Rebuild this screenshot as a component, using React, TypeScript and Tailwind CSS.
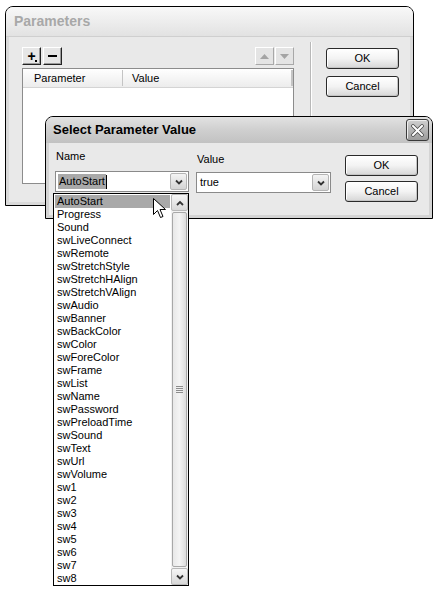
import React from 'react';

const FONT = { fontFamily: '"Liberation Sans", Arial, sans-serif' };

const PARAM_NAMES = [
  'AutoStart', 'Progress', 'Sound', 'swLiveConnect', 'swRemote', 'swStretchStyle',
  'swStretchHAlign', 'swStretchVAlign', 'swAudio', 'swBanner', 'swBackColor', 'swColor',
  'swForeColor', 'swFrame', 'swList', 'swName', 'swPassword', 'swPreloadTime', 'swSound',
  'swText', 'swUrl', 'swVolume', 'sw1', 'sw2', 'sw3', 'sw4', 'sw5', 'sw6', 'sw7', 'sw8',
];

function Chevron({ up = false, color = '#333' }: { up?: boolean; color?: string }) {
  return (
    <svg width="8" height="6" viewBox="0 0 8 6">
      <path d={up ? 'M1 5 L4 2 L7 5' : 'M1 1.5 L4 4.5 L7 1.5'} fill="none" stroke={color} strokeWidth="1.8" />
    </svg>
  );
}

function XpButton({ label }: { label: string }) {
  return (
    <button
      type="button"
      className="flex h-[21px] w-[73px] items-center justify-center rounded-[3px] border border-[#2a2a2a] bg-gradient-to-b from-[#ffffff] via-[#f3f3f3] to-[#d6d6d6] text-[11px] text-black shadow-[inset_-1px_-1px_0_#c4c4c4,inset_1px_1px_0_#ffffff]"
    >
      {label}
    </button>
  );
}

function ToolButton({ children, disabled = false }: { children: React.ReactNode; disabled?: boolean }) {
  return (
    <div
      className={
        'relative flex h-[18px] w-[19px] items-center justify-center border ' +
        (disabled
          ? 'border-t-white border-l-white border-r-[#a8a8a8] border-b-[#a8a8a8] bg-[#e4e4e4]'
          : 'border-t-white border-l-white border-r-[#222] border-b-[#222] bg-[#e6e6e6] shadow-[inset_-1px_-1px_0_#9a9a9a]')
      }
    >
      {children}
    </div>
  );
}

function Combo({ value, selected = false, width }: { value: string; selected?: boolean; width: string }) {
  return (
    <div className={'flex h-[21px] items-center border border-[#8a8a8a] bg-white p-[1px] ' + width}>
      <div className="flex flex-1 items-center pl-[1px] text-[11px] text-black">
        {selected ? (
          <>
            <span className="bg-[#a9a9a9] px-[1px] leading-[15px]">{value}</span>
            <span className="h-[14px] w-px bg-black" />
          </>
        ) : (
          <span className="pl-[1px]">{value}</span>
        )}
      </div>
      <div className="flex h-[17px] w-[17px] items-center justify-center rounded-[2px] border border-[#b4b4b4] bg-gradient-to-b from-[#f4f4f4] to-[#d4d4d4]">
        <Chevron />
      </div>
    </div>
  );
}

function Cursor() {
  return (
    <svg className="absolute left-[153px] top-[198px]" width="14" height="22" viewBox="0 0 14 22">
      <path d="M0.5 0.5 L0.5 16.5 L4.5 12.5 L7.5 19.5 L10 18.5 L7 11.5 L12.5 11.5 Z" fill="white" stroke="black" strokeWidth="1" />
    </svg>
  );
}

export default function App() {
  return (
    <div className="relative h-[592px] w-[440px] overflow-hidden bg-white" style={FONT}>
      {/* Parameters window (inactive) */}
      <div className="absolute left-[5px] top-[6px] flex h-[200px] w-[409px] flex-col overflow-hidden rounded-t-[8px] border border-black bg-[#e9e9e9]">
        <div className="flex h-[30px] items-center border-b border-[#cfcfcf] bg-gradient-to-b from-[#f8f8f8] to-[#e2e2e2] pl-[8px] text-[14px] font-bold text-[#a8a8a8]">
          Parameters
        </div>
        <div className="flex flex-1 border-x-[3px] border-b-[3px] border-[#dadada] pl-[13px] pt-[10px]">
          <div className="flex w-[272px] flex-col">
            <div className="flex items-center justify-between">
              <div className="flex gap-[2px]">
                <ToolButton>
                  <span className="text-[14px] font-bold leading-none text-black">+</span>
                  <span className="absolute bottom-[2px] right-[3px] h-[2px] w-[2px] bg-black" />
                </ToolButton>
                <ToolButton>
                  <span className="h-[2px] w-[9px] bg-black" />
                </ToolButton>
              </div>
              <div className="flex gap-[1px]">
                <ToolButton disabled>
                  <svg width="9" height="5" viewBox="0 0 9 5"><path d="M0 5 L4.5 0 L9 5 Z" fill="#a4a4a4" /></svg>
                </ToolButton>
                <ToolButton disabled>
                  <svg width="9" height="5" viewBox="0 0 9 5"><path d="M0 0 L4.5 5 L9 0 Z" fill="#a4a4a4" /></svg>
                </ToolButton>
              </div>
            </div>
            <div className="mt-[3px] h-[116px] border border-[#8c8c8c] bg-white">
              <div className="flex h-[19px] w-[270px] items-center border-b border-[#d4d4d4] bg-gradient-to-b from-white to-[#ececec] text-[11px] text-black">
                <div className="w-[100px] border-r border-[#c4c4c4] pl-[11px]">Parameter</div>
                <div className="flex-1 border-r-[2px] border-[#c4c4c4] pl-[9px]">Value</div>
              </div>
            </div>
          </div>
          <div className="ml-[16px] mt-[-5px] h-[154px] w-[2px] border-l border-[#b8b8b8] border-r border-r-white" />
          <div className="ml-[14px] mt-[1px] flex flex-col gap-[7px]">
            <XpButton label="OK" />
            <XpButton label="Cancel" />
          </div>
        </div>
      </div>

      {/* Select Parameter Value dialog (active) */}
      <div className="absolute left-[45px] top-[116px] flex h-[103px] w-[388px] flex-col overflow-hidden rounded-t-[8px] border border-black bg-[#e9e9e9]">
        <div className="flex h-[26px] items-center justify-between bg-gradient-to-b from-[#e2e2e2] via-[#cfcfcf] to-[#c2c2c2] pl-[7px] pr-[3px]">
          <span className="text-[13px] font-bold text-black">Select Parameter Value</span>
          <div className="flex h-[22px] w-[23px] items-center justify-center rounded-[3px] border border-[#3a3a3a] bg-gradient-to-b from-[#d0d0d0] to-[#9c9c9c] shadow-[inset_1px_1px_0_#eeeeee]">
            <svg width="13" height="13" viewBox="0 0 13 13">
              <path d="M2 2 L11 11 M11 2 L2 11" stroke="#4a4a4a" strokeWidth="3.6" strokeLinecap="square" />
              <path d="M2 2 L11 11 M11 2 L2 11" stroke="white" strokeWidth="2" strokeLinecap="square" />
            </svg>
          </div>
        </div>
        <div className="flex flex-1 border-x-[3px] border-b-[3px] border-[#d4d4d4] pl-[6px] pt-[7px]">
          <div className="flex flex-col">
            <span className="pl-[1px] text-[11px] leading-[13px] text-black">Name</span>
            <div className="mt-[8px]">
              <Combo value="AutoStart" selected width="w-[134px]" />
            </div>
          </div>
          <div className="ml-[7px] flex flex-col pt-[3px]">
            <span className="pl-[1px] text-[11px] leading-[13px] text-black">Value</span>
            <div className="mt-[6px]">
              <Combo value="true" width="w-[135px]" />
            </div>
          </div>
          <div className="ml-[14px] mt-[5px] flex flex-col gap-[5px]">
            <XpButton label="OK" />
            <XpButton label="Cancel" />
          </div>
        </div>
      </div>

      {/* dropdown list */}
      <div className="absolute left-[53px] top-[193px] flex h-[393px] w-[136px] border border-black bg-white">
        <div className="flex flex-1 flex-col p-[1px]">
          {PARAM_NAMES.map((name, i) => (
            <div
              key={name}
              className={'h-[13px] pl-[2px] text-[11px] leading-[13px] text-black ' + (i === 0 ? 'bg-[#a9a9a9]' : '')}
            >
              {name}
            </div>
          ))}
        </div>
        <div className="flex w-[17px] flex-col bg-[#f2f2f2]">
          <div className="flex h-[17px] items-center justify-center rounded-[2px] border border-[#b8b8b8] bg-gradient-to-b from-[#f6f6f6] to-[#d8d8d8]">
            <Chevron up />
          </div>
          <div className="mx-[1px] my-[1px] flex flex-1 items-center justify-center rounded-[2px] border border-[#a8a8a8] bg-gradient-to-r from-[#e8e8e8] via-[#f4f4f4] to-[#dcdcdc]">
            <div className="flex flex-col gap-[1px]">
              <span className="h-px w-[7px] bg-[#8c8c8c]" />
              <span className="h-px w-[7px] bg-[#8c8c8c]" />
              <span className="h-px w-[7px] bg-[#8c8c8c]" />
              <span className="h-px w-[7px] bg-[#8c8c8c]" />
            </div>
          </div>
          <div className="flex h-[17px] items-center justify-center rounded-[2px] border border-[#b8b8b8] bg-gradient-to-b from-[#f6f6f6] to-[#d8d8d8]">
            <Chevron />
          </div>
        </div>
      </div>

      <Cursor />
    </div>
  );
}
